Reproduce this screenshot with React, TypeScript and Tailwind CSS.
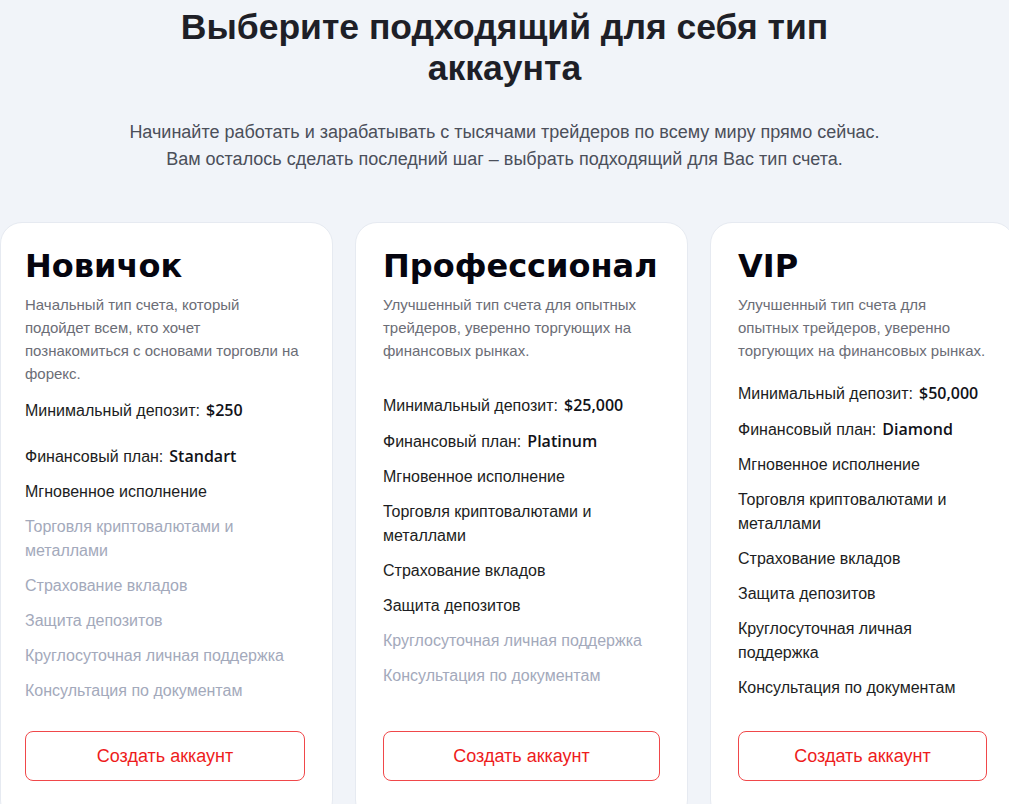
import React from "react";

type Feature = { text: string; value?: string; on: boolean; gapBefore?: string };

const cards: {
  title: string;
  desc: React.ReactNode;
  w: string;
  pl: string;
  pr: string;
  featMt: string;
  btnMt: string;
  features: Feature[];
}[] = [
  {
    title: "Новичок",
    desc: (
      <>
        Начальный тип счета, который
        <br />
        подойдет всем, кто хочет
        <br />
        познакомиться с основами торговли на
        <br />
        форекс.
      </>
    ),
    w: "w-[333px]",
    pl: "pl-[24px]",
    pr: "pr-[27px]",
    featMt: "mt-[13px]",
    btnMt: "mt-[28px]",
    features: [
      { text: "Минимальный депозит:", value: "$250", on: true },
      { text: "Финансовый план:", value: "Standart", on: true, gapBefore: "mt-[21px]" },
      { text: "Мгновенное исполнение", on: true },
      { text: "Торговля криптовалютами и металлами", on: false },
      { text: "Страхование вкладов", on: false },
      { text: "Защита депозитов", on: false },
      { text: "Круглосуточная личная поддержка", on: false },
      { text: "Консультация по документам", on: false },
    ],
  },
  {
    title: "Профессионал",
    desc: (
      <>
        Улучшенный тип счета для опытных
        <br />
        трейдеров, уверенно торгующих на
        <br />
        финансовых рынках.
      </>
    ),
    w: "w-[333px]",
    pl: "pl-[27px]",
    pr: "pr-[27px]",
    featMt: "mt-[31px]",
    btnMt: "mt-[43px]",
    features: [
      { text: "Минимальный депозит:", value: "$25,000", on: true },
      { text: "Финансовый план:", value: "Platinum", on: true },
      { text: "Мгновенное исполнение", on: true },
      { text: "Торговля криптовалютами и металлами", on: true },
      { text: "Страхование вкладов", on: true },
      { text: "Защита депозитов", on: true },
      { text: "Круглосуточная личная поддержка", on: false },
      { text: "Консультация по документам", on: false },
    ],
  },
  {
    title: "VIP",
    desc: (
      <>
        Улучшенный тип счета для
        <br />
        опытных трейдеров, уверенно
        <br />
        торгующих на финансовых рынках.
      </>
    ),
    w: "w-[305px]",
    pl: "pl-[27px]",
    pr: "pr-[27px]",
    featMt: "mt-[19px]",
    btnMt: "mt-[31px]",
    features: [
      { text: "Минимальный депозит:", value: "$50,000", on: true },
      { text: "Финансовый план:", value: "Diamond", on: true },
      { text: "Мгновенное исполнение", on: true },
      { text: "Торговля криптовалютами и металлами", on: true },
      { text: "Страхование вкладов", on: true },
      { text: "Защита депозитов", on: true },
      { text: "Круглосуточная личная поддержка", on: true },
      { text: "Консультация по документам", on: true },
    ],
  },
];

export default function App() {
  return (
    <div className="min-h-screen overflow-hidden bg-[#f1f4f9] font-['Liberation_Sans',Arial,sans-serif]">
      <h1 className="mx-auto w-[690px] pt-[7px] text-center text-[35.5px] font-bold leading-[41px] text-[#1e1f27]">
        Выберите подходящий для себя тип аккаунта
      </h1>
      <p className="mt-[30px] text-center text-[18px] leading-[27px] text-[#4b4f5a]">
        Начинайте работать и зарабатывать с тысячами трейдеров по всему миру прямо сейчас.
        <br />
        Вам осталось сделать последний шаг – выбрать подходящий для Вас тип счета.
      </p>
      <div className="mt-[49px] flex gap-[22px]">
        {cards.map((c) => (
          <div
            key={c.title}
            className={`${c.w} ${c.pl} ${c.pr} shrink-0 rounded-[22px] border border-[#e6eaf1] bg-white pt-[23px] pb-[40px]`}
          >
            <h2 className="font-['DejaVu_Sans',sans-serif] text-[32px] font-bold leading-[40px] text-[#05050f]">
              {c.title}
            </h2>
            <p className="mt-[7px] whitespace-nowrap text-[15px] leading-[23px] text-[#6b6d76]">{c.desc}</p>
            <ul className={`${c.featMt} flex flex-col`}>
              {c.features.map((f, i) => (
                <li
                  key={f.text}
                  className={`${i === 0 ? "" : f.gapBefore ?? "mt-[11px]"} text-[16px] leading-[24px] ${
                    f.on ? "text-[#1c1d22]" : "text-[#a3a9bb]"
                  }`}
                >
                  {f.text}
                  {f.value && (
                    <span className="ml-[6px] font-['Open_Sans',sans-serif] font-semibold text-[#111218]">
                      {f.value}
                    </span>
                  )}
                </li>
              ))}
            </ul>
            <button
              className={`${c.btnMt} flex h-[50px] w-full items-center justify-center rounded-[8px] border border-[#f0484a] bg-white text-[18px] text-[#ee1c1c]`}
            >
              Создать аккаунт
            </button>
          </div>
        ))}
      </div>
    </div>
  );
}
